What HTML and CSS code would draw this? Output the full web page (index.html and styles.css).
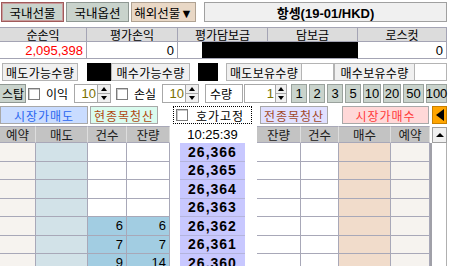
FILE: index.html
```html
<!DOCTYPE html>
<html lang="ko">
<head>
    <meta charset="UTF-8">
    <meta name="viewport" content="width=device-width, initial-scale=1.0">
    <title>해외선물 주문</title>
    <link rel="stylesheet" href="styles.css">
</head>
<body>
    <div class="tabs">
        <div class="tab tab-on">국내선물</div>
        <div class="tab">국내옵션</div>
        <div class="tab tab-drop">해외선물▼</div>
        <div class="title">항셍(19-01/HKD)</div>
    </div>

    <div class="summary">
        <div class="head">순손익</div>
        <div class="head">평가손익</div>
        <div class="head">평가담보금</div>
        <div class="head">담보금</div>
        <div class="head">로스컷</div>
        <div class="val red">2,095,398</div>
        <div class="val">0</div>
        <div class="val"><div class="mask mask-part"></div></div>
        <div class="val mask"></div>
        <div class="val">0</div>
    </div>

    <div class="qty">
        <div class="label lb1">매도가능수량</div>
        <div class="mask box1"></div>
        <div class="label lb2">매수가능수량</div>
        <div class="mask box2"></div>
        <div class="label lb3">매도보유수량</div>
        <div class="blank"></div>
        <div class="label lb4">매수보유수량</div>
        <div class="blank"></div>
    </div>

    <div class="stop">
        <div class="btn-stop">스탑</div>
        <div class="chk chk-first"></div>
        <div class="word">이익</div>
        <div class="spin">
            <div class="spin-val">10</div>
            <div class="spin-btns"><span class="up"></span><span class="down"></span></div>
        </div>
        <div class="chk"></div>
        <div class="word">손실</div>
        <div class="spin">
            <div class="spin-val">10</div>
            <div class="spin-btns"><span class="up"></span><span class="down"></span></div>
        </div>
        <div class="qty-label">수량</div>
        <div class="spin spin-qty">
            <div class="spin-val">1</div>
            <div class="spin-btns"><span class="up"></span><span class="down"></span></div>
        </div>
        <div class="nums">
            <div class="num">1</div>
            <div class="num">2</div>
            <div class="num">3</div>
            <div class="num">5</div>
            <div class="num n2">10</div>
            <div class="num n2">20</div>
            <div class="num n3">50</div>
            <div class="num n3">100</div>
        </div>
    </div>

    <div class="actions">
        <div class="act sell">시장가매도</div>
        <div class="act clear-one">현종목청산</div>
        <div class="fix"><div class="chk"></div><span>호가고정</span></div>
        <div class="act clear-all">전종목청산</div>
        <div class="act buy">시장가매수</div>
        <div class="arrow"><span></span></div>
    </div>

    <div class="book">
        <div class="c h">예약</div>
        <div class="c h">매도</div>
        <div class="c h">건수</div>
        <div class="c h">잔량</div>
        <div class="g"></div>
        <div class="time">10:25:39</div>
        <div class="g"></div>
        <div class="c h">잔량</div>
        <div class="c h">건수</div>
        <div class="c h">매수</div>
        <div class="c h">예약</div>
        <div class="scroll">
            <div class="scroll-top"><div class="scroll-btn"><span></span></div></div>
            <div class="scroll-track"></div>
        </div>

        <div class="c resv"></div><div class="c ask"></div><div class="c"></div><div class="c"></div>
        <div class="g"></div><div class="p">26,366</div><div class="g"></div>
        <div class="c"></div><div class="c"></div><div class="c bid"></div><div class="c resv"></div>

        <div class="c resv"></div><div class="c ask"></div><div class="c"></div><div class="c"></div>
        <div class="g"></div><div class="p">26,365</div><div class="g"></div>
        <div class="c"></div><div class="c"></div><div class="c bid"></div><div class="c resv"></div>

        <div class="c resv"></div><div class="c ask"></div><div class="c"></div><div class="c"></div>
        <div class="g"></div><div class="p">26,364</div><div class="g"></div>
        <div class="c"></div><div class="c"></div><div class="c bid"></div><div class="c resv"></div>

        <div class="c resv"></div><div class="c ask"></div><div class="c"></div><div class="c"></div>
        <div class="g"></div><div class="p">26,363</div><div class="g"></div>
        <div class="c"></div><div class="c"></div><div class="c bid"></div><div class="c resv"></div>

        <div class="c resv"></div><div class="c ask"></div><div class="c hl">6</div><div class="c hl">6</div>
        <div class="g"></div><div class="p">26,362</div><div class="g"></div>
        <div class="c"></div><div class="c"></div><div class="c bid"></div><div class="c resv"></div>

        <div class="c resv"></div><div class="c ask"></div><div class="c hl">7</div><div class="c hl">7</div>
        <div class="g"></div><div class="p">26,361</div><div class="g"></div>
        <div class="c"></div><div class="c"></div><div class="c bid"></div><div class="c resv"></div>

        <div class="c resv"></div><div class="c ask"></div><div class="c hl">9</div><div class="c hl">14</div>
        <div class="g"></div><div class="p">26,360</div><div class="g"></div>
        <div class="c"></div><div class="c"></div><div class="c bid"></div><div class="c resv"></div>
    </div>
</body>
</html>
```

FILE: styles.css
```css
*{
    margin: 0;
    padding: 0;
    box-sizing: border-box;
}
body{
    width: 450px;
    height: 266px;
    overflow: hidden;
    background: #fff;
    color: #000;
    font-family: "Liberation Sans", "Noto Sans CJK KR", sans-serif;
    font-size: 12px;
    white-space: nowrap;
}

/* top tabs */
.tabs{
    display: flex;
    height: 20px;
    margin-top: 2px;
    padding-left: 1px;
}
.tab{
    width: 63px;
    margin-right: 2px;
    display: flex;
    align-items: center;
    justify-content: center;
    background: #c9d3cc;
    border: 1px solid #8f9893;
    font-size: 12.5px;
}
.tab-on{
    border-color: #a05a5a;
    box-shadow: inset 0 0 0 1px #c99c9c;
}
.tab-drop{
    width: 65px;
    background: #e9d8c6;
    border-color: #b0a292;
}
.title{
    width: 243px;
    margin-left: 6px;
    display: flex;
    align-items: center;
    justify-content: center;
    background: #f0f0f0;
    border: 1px solid #a0a0a0;
    font-size: 13px;
    font-weight: bold;
}

/* summary */
.summary{
    display: grid;
    grid-template-columns: 87px 91px 90px 90px 89px;
    grid-template-rows: 15px 17px;
    margin-top: 5px;
}
.head{
    display: flex;
    align-items: center;
    justify-content: center;
    background: #dcdcdc;
    border-top: 1px solid #a4a4b4;
    border-right: 1px solid #a4a4b4;
    border-bottom: 1px solid #a4a4b4;
    font-size: 12px;
}
.val{
    display: flex;
    align-items: center;
    justify-content: flex-end;
    padding-right: 3px;
    background: #fff;
    border-right: 1px solid #a4a4b4;
    border-bottom: 1px solid #a4a4b4;
    font-size: 13px;
}
.red{
    color: #ff0000;
}
.mask{
    background: #000;
}
.val.mask{
    border-right-color: #000;
}
.mask-part{
    width: 66px;
    height: 16px;
    margin-right: -4px;
}

/* quantity row */
.qty{
    display: flex;
    height: 18px;
    margin-top: 4px;
}
.label{
    display: flex;
    align-items: center;
    justify-content: center;
    background: #f0f0f0;
    border: 1px solid #b4b4b4;
    letter-spacing: 0.3px;
    font-size: 12px;
}
.lb1{ width: 76px; margin-left: 2px; }
.lb2{ width: 79px; }
.lb3{ width: 76px; margin-left: 8px; }
.lb4{ width: 81px; }
.box1{ width: 24px; margin-left: 9px; }
.box2{ width: 20px; margin-left: 8px; }
.blank{
    width: 32px;
    background: #fff;
    border: 1px solid #b4b4b4;
    border-left: 0;
}

/* stop row */
.stop{
    display: flex;
    align-items: center;
    height: 19px;
    margin-top: 3px;
}
.btn-stop{
    width: 26px;
    height: 19px;
    display: flex;
    align-items: center;
    justify-content: flex-end;
    overflow: hidden;
    padding-right: 1px;
    background: #c9d3cc;
    border: 1px solid #8f9893;
    border-left: 0;
    font-size: 12px;
}
.chk{
    width: 12px;
    height: 12px;
    margin-left: 5px;
    background: #fff;
    border: 1px solid #7c7c7c;
    box-shadow: inset 1px 1px 0 #c8c8c8;
}
.chk-first{
    margin-left: 2px;
}
.word{
    width: 22px;
    margin-left: 6px;
    font-size: 12px;
}
.spin{
    display: flex;
    height: 19px;
    margin-left: 6px;
}
.spin-val{
    width: 24px;
    display: flex;
    align-items: center;
    justify-content: flex-end;
    padding-right: 1px;
    background: #fff;
    border: 1px solid #a8a8a8;
    color: #7a7000;
    font-size: 13px;
}
.spin-btns{
    width: 13px;
    display: flex;
    flex-direction: column;
}
.spin-btns span{
    flex: 1;
    display: flex;
    align-items: center;
    justify-content: center;
    background: #f0f0f0;
    border: 1px solid #a8a8a8;
    border-left: 0;
}
.spin-btns span + span{
    border-top: 0;
}
.up::after{
    content: "";
    border-left: 3px solid transparent;
    border-right: 3px solid transparent;
    border-bottom: 4px solid #000;
}
.down::after{
    content: "";
    border-left: 3px solid transparent;
    border-right: 3px solid transparent;
    border-top: 4px solid #000;
}
.qty-label{
    width: 38px;
    height: 19px;
    margin-left: 6px;
    display: flex;
    align-items: center;
    padding-left: 4px;
    background: #fff;
    border: 1px solid #a8a8a8;
    font-size: 12px;
}
.spin-qty{
    margin-left: 1px;
}
.spin-qty .spin-val{
    width: 32px;
}
.spin-qty .spin-btns{
    width: 11px;
}
.nums{
    display: flex;
    gap: 2px;
    margin-left: 4px;
}
.num{
    width: 16px;
    height: 19px;
    display: flex;
    align-items: center;
    justify-content: center;
    background: #c9d3cc;
    border: 1px solid #9aa29d;
    font-size: 13px;
}
.n2{ width: 18px; }
.n3{ width: 21px; }

/* action buttons */
.actions{
    display: flex;
    align-items: center;
    height: 18px;
    margin-top: 3px;
}
.act{
    height: 18px;
    display: flex;
    align-items: center;
    justify-content: center;
    border: 1px solid #a8a8a8;
    letter-spacing: 1px;
    font-size: 12px;
}
.sell{
    width: 88px;
    background: #c9dcff;
    color: #2a66f0;
}
.clear-one{
    width: 68px;
    margin-left: 2px;
    background: #d9fbee;
    color: #b04810;
}
.fix{
    width: 79px;
    height: 18px;
    margin-left: 15px;
    display: flex;
    align-items: center;
    border: 1px dotted #000;
    font-size: 12px;
    letter-spacing: 1px;
}
.fix .chk{
    margin-left: 2px;
    margin-right: 8px;
}
.clear-all{
    width: 68px;
    margin-left: 8px;
    background: #e0e0ff;
    color: #a04828;
}
.buy{
    width: 87px;
    margin-left: 14px;
    background: #ffd8d8;
    color: #ff3838;
}
.arrow{
    width: 15px;
    height: 18px;
    margin-left: 3px;
    display: flex;
    align-items: center;
    justify-content: center;
    background: #ffa500;
    border: 1px solid #c88000;
}
.arrow span{
    border-top: 6px solid transparent;
    border-bottom: 6px solid transparent;
    border-right: 8px solid #000;
}

/* order book */
.book{
    display: grid;
    grid-template-columns: 36px 52px 39px 43px 10px 65px 12px 44px 38px 52px 39px 17px;
    grid-template-rows: 17px;
    grid-auto-rows: 18.5px;
    margin-top: 2px;
}
.c{
    display: flex;
    align-items: center;
    justify-content: flex-end;
    padding-right: 3px;
    background: #fff;
    border-right: 1px solid #a8a8b8;
    border-bottom: 1px solid #a8a8b8;
    font-size: 13px;
}
.h{
    justify-content: center;
    padding-right: 0;
    background: #c3c3c3;
    border-top: 1px solid #a8a8b8;
    border-right-color: #dedede;
    color: #202020;
    font-size: 12.5px;
}
.resv{ background: #f6f3ef; }
.ask{ background: #d2e2e8; }
.bid{ background: #f1dccb; }
.hl{ background: #a2cde2; }
.g{
    background: #fff;
}
.time{
    display: flex;
    align-items: center;
    justify-content: center;
    font-size: 13px;
}
.p{
    display: flex;
    align-items: center;
    justify-content: center;
    background: #c8c8ff;
    border-bottom: 1px solid #b4b4dc;
    font-size: 14px;
    font-weight: bold;
    letter-spacing: 1px;
}
.scroll{
    grid-column: 12;
    grid-row: 1 / span 8;
    display: flex;
    flex-direction: column;
}
.scroll-top{
    height: 17px;
    padding-left: 2px;
}
.scroll-btn{
    width: 15px;
    height: 16px;
    margin-top: 1px;
    display: flex;
    align-items: center;
    justify-content: center;
    background: #f0f0f0;
    border: 1px solid #a0a0a0;
}
.scroll-btn span{
    border-left: 4px solid transparent;
    border-right: 4px solid transparent;
    border-bottom: 4px solid #000;
}
.scroll-track{
    flex: 1;
    border-left: 2px solid #a0a0a8;
    border-right: 1px solid #b0b0b0;
}
```
